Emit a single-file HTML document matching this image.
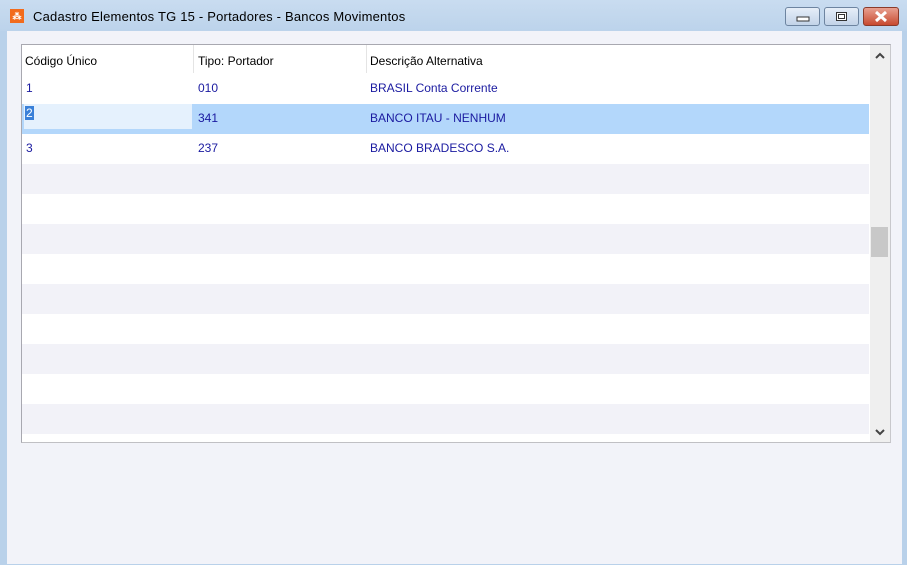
<!DOCTYPE html>
<html><head><style>
*{margin:0;padding:0;box-sizing:border-box}
body{width:907px;height:565px;overflow:hidden;background:#b9d1ea;font-family:"Liberation Sans",sans-serif;position:relative}
.title{position:absolute;left:0;top:0;width:907px;height:31px;background:linear-gradient(#c9dcf0,#bcd3eb)}
.title .t{position:absolute;left:33px;top:9px;font-size:13px;color:#000;letter-spacing:0.2px}
.icon{position:absolute;left:10px;top:9px;width:14px;height:14px;background:#f26b1d;color:#fff;font-size:9px;line-height:14px;text-align:center;font-weight:bold}
.btn{position:absolute;top:7px;height:19px;border:1px solid #6d84a0;border-radius:3px;background:linear-gradient(#e6eef8,#c2d3e8)}
.client{position:absolute;left:7px;top:31px;width:895px;height:533px;background:#f2f3f9}
.grid{position:absolute;left:21px;top:44px;width:870px;height:399px;border:1px solid #a8a8b0;border-right-color:#c8c8cc;border-bottom-color:#c0c0c4;background:#fff;overflow:hidden}
.row{position:absolute;left:0;width:847px;height:30px;font-size:12px;color:#1a1aa0}
.row span{position:absolute;top:8px}
.hdr{color:#000;top:0;height:28px}
.stripe{background:#f2f2f8}
.sb{position:absolute;right:0;top:0;width:20px;height:397px;background:#efefef}
</style></head><body>
<div class="title">
<div class="icon">⁂</div>
<div class="t">Cadastro Elementos TG 15 - Portadores - Bancos Movimentos</div>
<div class="btn" style="left:785px;width:35px"><svg width="33" height="17" style="position:absolute;left:0;top:0"><rect x="11" y="9" width="12" height="4" fill="#fff" stroke="#333"/></svg></div>
<div class="btn" style="left:824px;width:35px"><svg width="33" height="17" style="position:absolute;left:0;top:0"><rect x="11.5" y="4.5" width="10" height="8" fill="#fff" stroke="#333"/><rect x="13.5" y="6.5" width="6" height="4" fill="#fff" stroke="#333"/></svg></div>
<div class="btn" style="left:863px;width:36px;background:linear-gradient(#e8a090,#c84a30);border-color:#8a3a2a"><svg width="34" height="17" style="position:absolute;left:0;top:0"><path d="M12 4 L22 13 M22 4 L12 13" stroke="#fff" stroke-width="3"/></svg></div>
</div>
<div class="client"></div>
<div class="grid">
<div class="row hdr"><span style="left:3px;top:9px">Código Único</span><span style="left:176px;top:9px">Tipo: Portador</span><span style="left:348px;top:9px">Descrição Alternativa</span>
<div style="position:absolute;left:171px;top:0;width:1px;height:28px;background:#e4e4e4"></div>
<div style="position:absolute;left:344px;top:0;width:1px;height:28px;background:#e4e4e4"></div>
</div>
<div class="row" style="top:28px"><span style="left:4px">1</span><span style="left:176px">010</span><span style="left:348px">BRASIL Conta Corrente</span></div>
<div class="row" style="top:59px;background:#b3d7fb"><div style="position:absolute;left:2px;top:0;width:168px;height:25px;background:#e5f1fd"></div><span style="left:3px;top:2px;background:#3a80d8;color:#fff;padding:0 1px">2</span><span style="left:176px;top:7px">341</span><span style="left:348px;top:7px">BANCO ITAU - NENHUM</span></div>
<div class="row" style="top:88px"><span style="left:4px">3</span><span style="left:176px">237</span><span style="left:348px">BANCO BRADESCO S.A.</span></div>
<div class="row stripe" style="top:119px"></div>
<div class="row stripe" style="top:179px"></div>
<div class="row stripe" style="top:239px"></div>
<div class="row stripe" style="top:299px"></div>
<div class="row stripe" style="top:359px"></div>
<div class="sb">
<svg width="20" height="20" style="position:absolute;left:0;top:2px"><path d="M6 11 L10 7 L14 11" stroke="#444" stroke-width="2" fill="none"/></svg>
<div style="position:absolute;left:1px;top:182px;width:17px;height:30px;background:#c8c8c8"></div>
<svg width="20" height="20" style="position:absolute;left:0;top:377px"><path d="M6 8 L10 12 L14 8" stroke="#444" stroke-width="2" fill="none"/></svg>
</div>
</div>
</body></html>
